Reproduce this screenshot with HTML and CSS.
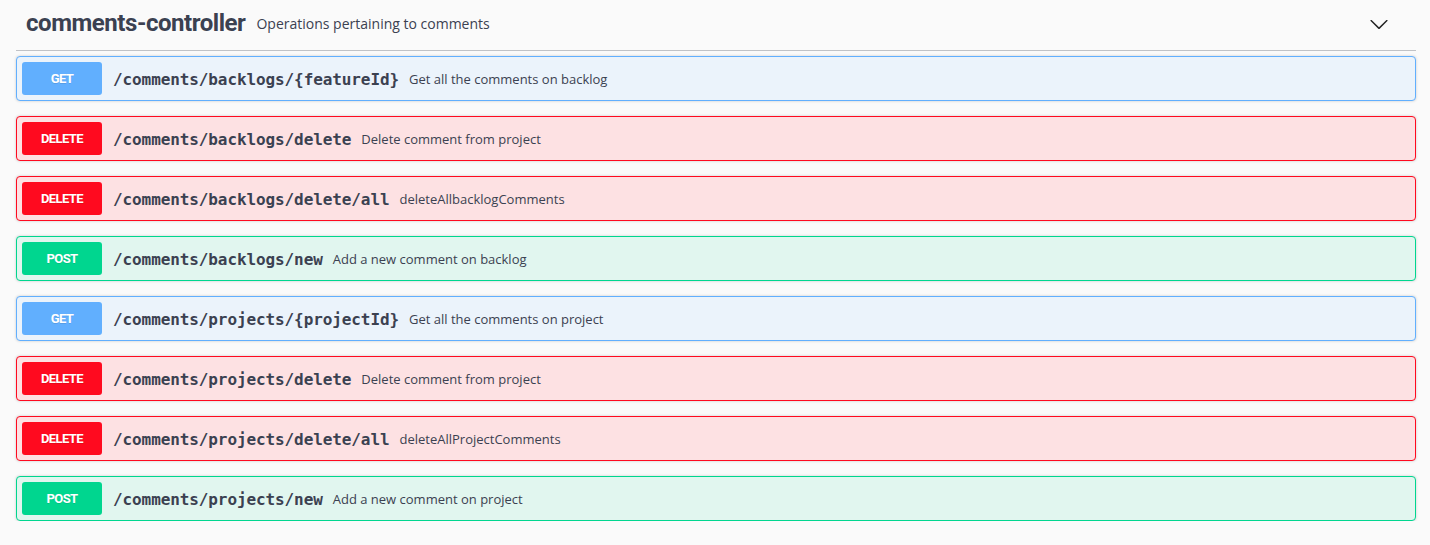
FILE: index.html
```html
<!DOCTYPE html>
<html>
<head>
<meta charset="utf-8">
<link rel="stylesheet" href="styles.css">
</head>
<body>
<div class="wrapper">
  <div class="tag-section">
    <h4 class="opblock-tag">
      <span class="tag-name">comments-controller</span>
      <span class="tag-desc">Operations pertaining to comments</span>
      <span class="expand">
        <svg width="20" height="20" viewBox="0 0 20 20"><path d="M17.418 6.109c.272-.268.709-.268.979 0s.271.701 0 .969l-7.908 7.83c-.27.268-.707.268-.979 0l-7.908-7.83c-.27-.268-.27-.701 0-.969.271-.268.709-.268.979 0L10 13.25l7.418-7.141z" fill="#222"/></svg>
      </span>
    </h4>
    <div class="ops">
      <div class="opblock get"><span class="method">GET</span><span class="path">/comments/backlogs/{featureId}</span><span class="desc">Get all the comments on backlog</span></div>
      <div class="opblock delete"><span class="method">DELETE</span><span class="path">/comments/backlogs/delete</span><span class="desc">Delete comment from project</span></div>
      <div class="opblock delete"><span class="method">DELETE</span><span class="path">/comments/backlogs/delete/all</span><span class="desc">deleteAllbacklogComments</span></div>
      <div class="opblock post"><span class="method">POST</span><span class="path">/comments/backlogs/new</span><span class="desc">Add a new comment on backlog</span></div>
      <div class="opblock get"><span class="method">GET</span><span class="path">/comments/projects/{projectId}</span><span class="desc">Get all the comments on project</span></div>
      <div class="opblock delete"><span class="method">DELETE</span><span class="path">/comments/projects/delete</span><span class="desc">Delete comment from project</span></div>
      <div class="opblock delete"><span class="method">DELETE</span><span class="path">/comments/projects/delete/all</span><span class="desc">deleteAllProjectComments</span></div>
      <div class="opblock post"><span class="method">POST</span><span class="path">/comments/projects/new</span><span class="desc">Add a new comment on project</span></div>
    </div>
  </div>
</div>
</body>
</html>
```

FILE: styles.css
```css
html, body {
  margin: 0;
  padding: 0;
  background: #fafafa;
}
body {
  font-family: Roboto, "Noto Sans", sans-serif;
  color: #3b4151;
}
.wrapper {
  padding: 0 14px 0 16px;
}
.opblock-tag {
  display: flex;
  align-items: center;
  margin: 0 0 5px 0;
  padding: 8px 20px 12px 10px;
  height: 30px;
  border-bottom: 1px solid rgba(59, 65, 81, 0.3);
}
.tag-name {
  font-size: 24px;
  font-weight: 700;
  letter-spacing: -0.45px;
  color: #3b4151;
}
.tag-desc {
  flex: 1;
  padding: 0 11px;
  font-family: "Open Sans", Roboto, sans-serif;
  font-size: 14px;
  font-weight: 400;
  letter-spacing: 0;
  color: #3b4151;
}
.expand {
  display: flex;
  margin-right: 7px;
  margin-top: 2px;
}
.ops {
  display: flex;
  flex-direction: column;
  gap: 15px;
}
.opblock {
  display: flex;
  align-items: center;
  padding: 5px;
  border: 1px solid;
  border-radius: 4px;
  box-shadow: 0 0 3px rgba(0, 0, 0, 0.19);
}
.method {
  min-width: 80px;
  height: 33px;
  display: flex;
  align-items: center;
  justify-content: center;
  box-sizing: border-box;
  border-radius: 3px;
  color: #fff;
  font-size: 13px;
  font-weight: 700;
  letter-spacing: -0.6px;
  text-shadow: 0 1px 0 rgba(0, 0, 0, 0.1);
}
.path {
  padding: 2px 10px 0 11px;
  font-family: "DejaVu Sans Mono", "Liberation Mono", monospace;
  font-size: 16px;
  font-weight: 700;
  letter-spacing: -0.1px;
  color: #3b4151;
}
.desc {
  padding-top: 1px;
  font-family: "Open Sans", Roboto, sans-serif;
  font-size: 13px;
  letter-spacing: 0;
  color: #3b4151;
}
.get { background: #ebf3fb; border-color: #61affe; }
.get .method { background: #61affe; }
.delete { background: #fde1e3; border-color: #ff0a1f; }
.delete .method { background: #ff0a1f; }
.post { background: #e1f6ef; border-color: #00d68f; }
.post .method { background: #00d68f; }
```
